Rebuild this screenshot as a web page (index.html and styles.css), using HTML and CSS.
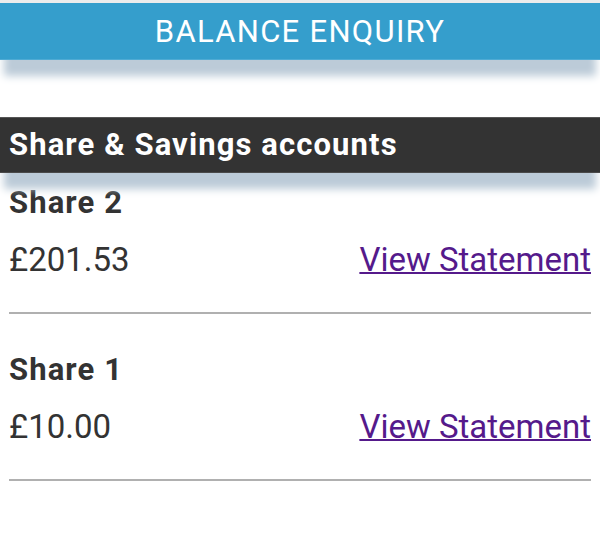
FILE: index.html
```html
<!DOCTYPE html>
<html lang="en">
<head>
<meta charset="utf-8">
<title>Balance Enquiry</title>
<link rel="stylesheet" href="styles.css">
</head>
<body>
<div class="page">
  <header class="topbar">BALANCE ENQUIRY</header>
  <main class="content">
    <h2 class="section-head">Share &amp; Savings accounts</h2>
    <div class="accounts">
      <div class="account">
        <div class="account-name">Share 2</div>
        <div class="account-row">
          <span class="amount">£201.53</span>
          <a class="statement" href="#">View Statement</a>
        </div>
      </div>
      <div class="account">
        <div class="account-name">Share 1</div>
        <div class="account-row">
          <span class="amount">£10.00</span>
          <a class="statement" href="#">View Statement</a>
        </div>
      </div>
    </div>
  </main>
</div>
</body>
</html>
```
FILE: styles.css
```css
html, body {
  margin: 0;
  padding: 0;
  background: #ffffff;
}
body {
  font-family: Roboto, "Liberation Sans", Arial, sans-serif;
  color: #333333;
}
.page {
  border-top: 3px solid #ececec;
  width: 600px;
  height: 550px;
  overflow: hidden;
}
.topbar {
  position: relative;
  z-index: 2;
  height: 57px;
  padding-top: 2px;
  line-height: 54px;
  background: #359ecc;
  border-bottom: 1px solid #4fabd4;
  box-sizing: border-box;
  color: #ffffff;
  text-align: center;
  font-size: 31px;
  letter-spacing: 1.3px;
  font-weight: 400;
  box-shadow: 0 20px 8px -4px #bccbd8;
}
.content {
  padding-top: 57px;
}
.section-head {
  position: relative;
  z-index: 2;
  margin: 0;
  height: 56px;
  box-sizing: border-box;
  border-top: 1px solid #555555;
  border-bottom: 1px solid #4a4a4a;
  background: #333333;
  color: #ffffff;
  font-size: 31px;
  letter-spacing: 1.1px;
  font-weight: 700;
  line-height: 54px;
  padding: 0 9px;
  box-shadow: 0 20px 8px -4px #bccbd8;
}
.accounts {
  display: flex;
  flex-direction: column;
  gap: 36px;
  padding-top: 10px;
}
.account {
  margin: 0 9px;
  padding-bottom: 32px;
  border-bottom: 2px solid #b0b0b0;
}
.account-name {
  font-size: 31px;
  letter-spacing: 1.1px;
  font-weight: 700;
  line-height: 40px;
}
.account-row {
  margin-top: 17px;
  display: flex;
  justify-content: space-between;
  align-items: baseline;
  line-height: 40px;
  font-size: 33px;
}
.amount {
  font-weight: 400;
}
.statement {
  color: #551a8b;
  text-decoration: underline;
  text-decoration-thickness: 2px;
}
```
